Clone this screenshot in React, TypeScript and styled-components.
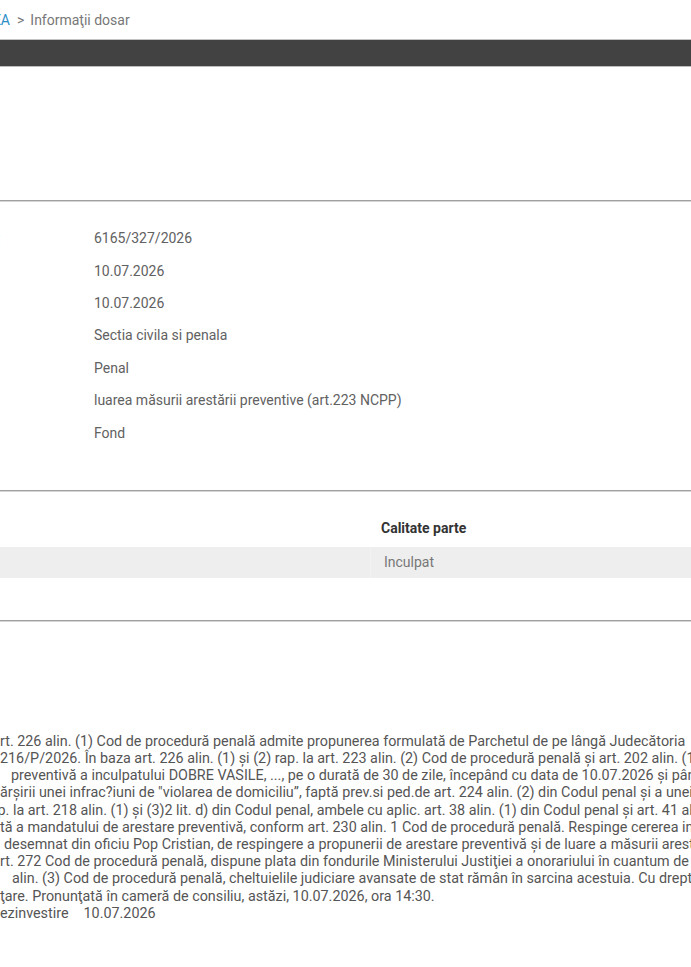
import React from 'react';
import styled, { createGlobalStyle } from 'styled-components';

const GlobalStyle = createGlobalStyle`
  html, body {
    margin: 0;
    padding: 0;
    background: #fff;
    overflow: hidden;
  }
  body {
    font-family: Roboto, 'Liberation Sans', Arial, sans-serif;
    font-size: 14px;
    color: #616161;
  }
`;

const Page = styled.div`
  width: 1100px;
`;

const Breadcrumbs = styled.nav`
  display: flex;
  align-items: center;
  height: 39px;
  white-space: nowrap;
  color: #777;
`;

// the trail before the current page is wider than the visible area
const Trail = styled.div`
  width: 240px;
  margin-left: -230px;
  text-align: right;
  flex-shrink: 0;
`;

const CrumbLink = styled.a`
  color: #2b8dc8;
  text-decoration: none;
`;

const Separator = styled.span`
  margin: 0 6px 0 7px;
`;

const Toolbar = styled.div`
  height: 26px;
  background: #424242;
  border-top: 1px solid #c4c4c4;
  border-bottom: 1px solid #bdbdbd;
`;

const Header = styled.div`
  height: 133px;
`;

const Section = styled.section<{ $top: number; $bottom: number }>`
  border-top: 1px solid #a0a0a0;
  box-shadow: inset 0 1px 0 #d6d6d6;
  padding-top: ${(p) => p.$top}px;
  padding-bottom: ${(p) => p.$bottom}px;
`;

const InfoRow = styled.div`
  display: flex;
  height: 32.4px;
  align-items: center;
  white-space: nowrap;
`;

const InfoLabel = styled.div`
  width: 178px;
  margin-left: -84px;
  flex-shrink: 0;
`;

const InfoValue = styled.div``;

const Parties = styled.div`
  display: grid;
  grid-template-columns: 570px 1fr;
  margin-left: -200px;
`;

const HeadCell = styled.div`
  height: 37px;
  display: flex;
  align-items: center;
  padding-left: 11px;
  font-weight: 700;
  color: #333;
`;

const Cell = styled.div<{ $first?: boolean }>`
  height: 31px;
  display: flex;
  align-items: center;
  padding-left: ${(p) => (p.$first ? 11 : 13)}px;
  background: #eeeeee;
  color: #777;
  border-left: ${(p) => (p.$first ? 'none' : '1px solid #f2f2f2')};
`;

const Ruling = styled.div`
  color: #555;
  font-size: 14.35px;
  line-height: 17.2px;
  white-space: nowrap;
`;

const RulingLine = styled.div<{ $indent: number }>`
  text-indent: ${(p) => p.$indent}px;
`;

const DocRow = styled.div`
  display: flex;
  gap: 15px;
`;

const infoRows = [
  ['Număr dosar:', '6165/327/2026'],
  ['Data:', '10.07.2026'],
  ['Modificat:', '10.07.2026'],
  ['Secţie:', 'Sectia civila si penala'],
  ['Materie:', 'Penal'],
  ['Obiect:', 'luarea măsurii arestării preventive (art.223 NCPP)'],
  ['Stadiu:', 'Fond'],
];

const rulingLines: [number, string][] = [
  [0, 'rt. 226 alin. (1) Cod de procedură penală admite propunerea formulată de Parchetul de pe lângă Judecătoria'],
  [0, '216/P/2026. În baza art. 226 alin. (1) și (2) rap. la art. 223 alin. (2) Cod de procedură penală și art. 202 alin. (1) lit. a)'],
  [11, 'preventivă a inculpatului DOBRE VASILE, ..., pe o durată de 30 de zile, începând cu data de 10.07.2026 și până la data de'],
  [0, 'ărșirii unei infrac?iuni de "violarea de domiciliu”, faptă prev.si ped.de art. 224 alin. (2) din Codul penal și a unei infracţiuni'],
  [-2.5, 'p. la art. 218 alin. (1) și (3)2 lit. d) din Codul penal, ambele cu aplic. art. 38 alin. (1) din Codul penal și art. 41 alin. (1)'],
  [0, 'tă a mandatului de arestare preventivă, conform art. 230 alin. 1 Cod de procedură penală. Respinge cererea inculpatului'],
  [4, 'desemnat din oficiu Pop Cristian, de respingere a propunerii de arestare preventivă și de luare a măsurii arestului la domiciliu'],
  [0, 'rt. 272 Cod de procedură penală, dispune plata din fondurile Ministerului Justiţiei a onorariului în cuantum de 680 lei'],
  [12, 'alin. (3) Cod de procedură penală, cheltuielile judiciare avansate de stat rămân în sarcina acestuia. Cu drept de contestaţie'],
  [0, 'ţare. Pronunţată în cameră de consiliu, astăzi, 10.07.2026, ora 14:30.'],
];

export default function App() {
  return (
    <Page>
      <GlobalStyle />
      <Breadcrumbs>
        <Trail>
          <CrumbLink href="#">JUDECĂTORIA TULCEA</CrumbLink>
        </Trail>
        <Separator>&gt;</Separator>
        <span>Informaţii dosar</span>
      </Breadcrumbs>
      <Toolbar />
      <Header />

      <Section $top={21} $bottom={41}>
        {infoRows.map(([label, value]) => (
          <InfoRow key={label}>
            <InfoLabel>{label}</InfoLabel>
            <InfoValue>{value}</InfoValue>
          </InfoRow>
        ))}
      </Section>

      <Section $top={19} $bottom={42}>
        <Parties>
          <HeadCell>Nume</HeadCell>
          <HeadCell>Calitate parte</HeadCell>
          <Cell $first>DOBRE VASILE</Cell>
          <Cell>Inculpat</Cell>
        </Parties>
      </Section>

      <Section $top={112} $bottom={40}>
        <Ruling>
          {rulingLines.map(([indent, text], i) => (
            <RulingLine key={i} $indent={indent}>
              {text}
            </RulingLine>
          ))}
          <DocRow>
            <span>ezinvestire</span>
            <span>10.07.2026</span>
          </DocRow>
        </Ruling>
      </Section>
    </Page>
  );
}
